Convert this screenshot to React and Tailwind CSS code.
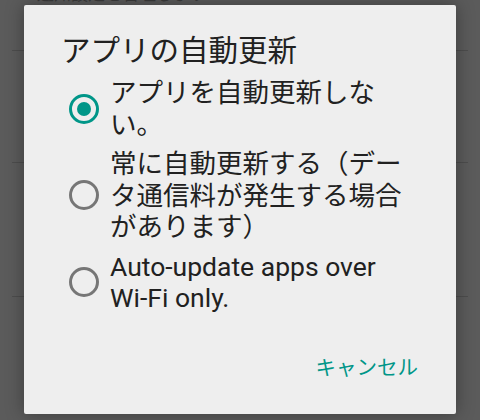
import React from 'react';

const font = "font-['Roboto','Noto_Sans_CJK_JP',sans-serif]";

function Radio({ checked }) {
    return (
        <div
            className={`w-[30px] h-[30px] shrink-0 rounded-full border-[3px] flex items-center justify-center ${
                checked ? 'border-[#009688]' : 'border-[#767676]'
            }`}
        >
            {checked && <div className="w-[14px] h-[14px] rounded-full bg-[#009688]" />}
        </div>
    );
}

const options = [
    { label: 'アプリを自動更新しない。', checked: true },
    { label: '常に自動更新する（データ通信料が発生する場合があります）', checked: false },
    { label: 'Auto-update apps over Wi-Fi only.', checked: false },
];

export default function App() {
    return (
        <div className={`relative w-[480px] h-[420px] overflow-hidden bg-[#5b5b5b] ${font}`}>
            {/* settings list behind the dim */}
            <div className="h-[50px] px-[37px] flex flex-col">
                <div className="-mt-[16px] text-[17px] leading-[20px] text-[#3b3b3b]">通知設定を管理します</div>
            </div>
            <div className="mx-[12px] h-px bg-[#4d4d4d]" />
            <div className="h-[111px]" />
            <div className="mx-[12px] h-px bg-[#4d4d4d]" />
            <div className="h-[133px]" />
            <div className="mx-[12px] h-px bg-[#4d4d4d]" />

            {/* dialog */}
            <div className="absolute left-[24px] top-[5px] w-[432px] h-[409px] rounded-[2px] bg-[#eeeeee] shadow-[0_0_18px_rgba(0,0,0,0.35)] flex flex-col">
                <div className="pt-[28px] pl-[37px] text-[29.5px] leading-[36px] text-[#212121]">アプリの自動更新</div>

                <div className="mt-[8px] flex flex-col gap-[8px]">
                    {options.map((o) => (
                        <div key={o.label} className="flex items-center pl-[45px] gap-[11px]">
                            <Radio checked={o.checked} />
                            <div className="w-[300px] text-[26.5px] leading-[31.5px] text-[#212121]">{o.label}</div>
                        </div>
                    ))}
                </div>

                <div className="mt-auto mb-[34px] flex justify-end pr-[38px]">
                    <span className="text-[20.5px] leading-[24px] text-[#009688]">キャンセル</span>
                </div>
            </div>
        </div>
    );
}
